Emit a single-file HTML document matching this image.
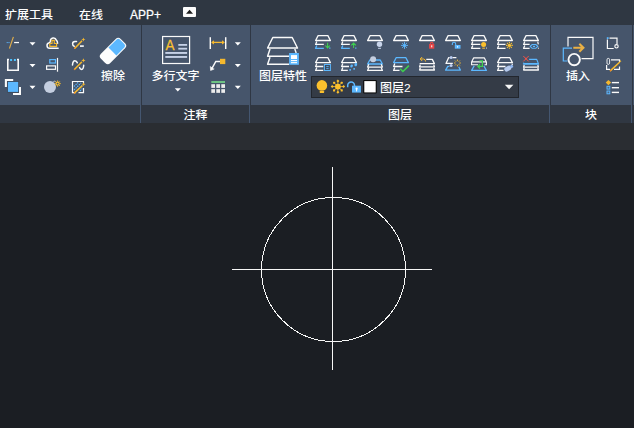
<!DOCTYPE html>
<html lang="zh-CN">
<head>
<meta charset="utf-8">
<title>CAD</title>
<style>
html,body{margin:0;padding:0;}
body{width:634px;height:428px;overflow:hidden;background:#1b1e23;position:relative;
 font-family:"Liberation Sans","Noto Sans CJK SC",sans-serif;font-size:12px;color:#fff;font-weight:500;}
.abs{position:absolute;}
#tabs{left:0;top:0;width:634px;height:25px;background:#2f3742;}
#ribbon{left:0;top:25px;width:634px;height:80px;background:#46556b;}
#labels{left:0;top:105px;width:634px;height:18px;background:#303742;}
#band{left:0;top:123px;width:634px;height:27px;background:#2a2d32;}
#canvas{left:0;top:150px;width:634px;height:278px;background:#1b1e23;}
.t{position:absolute;white-space:nowrap;line-height:16px;height:16px;transform:scaleY(0.93);transform-origin:0 16px;}
.sepd{position:absolute;top:25px;height:80px;width:1px;background:#2f3744;}
.sepl{position:absolute;top:105px;height:18px;width:1px;background:#445670;}
#combo{left:311px;top:76px;width:208px;height:22px;background:#343b46;border:1px solid #22262d;box-sizing:border-box;}
#svg{left:0;top:0;}
</style>
</head>
<body>
<div id="tabs" class="abs"></div>
<div id="ribbon" class="abs"></div>
<div id="labels" class="abs"></div>
<div id="band" class="abs"></div>
<div id="canvas" class="abs"></div>
<div class="sepd" style="left:141px"></div>
<div class="sepd" style="left:250px"></div>
<div class="sepd" style="left:550px"></div>
<div class="sepd" style="left:632px"></div>
<div class="sepl" style="left:140px"></div>
<div class="sepl" style="left:249px"></div>
<div class="sepl" style="left:549px"></div>
<div class="sepl" style="left:631px"></div>
<div id="combo" class="abs"></div>

<div class="t" style="left:5px;top:7px">扩展工具</div>
<div class="t" style="left:79px;top:7px">在线</div>
<div class="t" style="left:130px;top:7px;-webkit-text-stroke:0.25px #fff;transform:scaleY(1.1);transform-origin:0 12.500px">APP+</div>
<div class="t" style="left:101px;top:68px">擦除</div>
<div class="t" style="left:151.500px;top:68px">多行文字</div>
<div class="t" style="left:259px;top:68px">图层特性</div>
<div class="t" style="left:380px;top:80px">图层2</div>
<div class="t" style="left:566px;top:68px">插入</div>
<div class="t" style="left:183.500px;top:107px">注释</div>
<div class="t" style="left:388px;top:107px">图层</div>
<div class="t" style="left:585px;top:107px">块</div>

<svg id="svg" class="abs" width="634" height="428" viewBox="0 0 634 428">
<rect x="183" y="7" width="13" height="10" rx="1" fill="#fbfbfb"/>
<path d="M186 13.800 L189.500 9.800 L193 13.800 Z" fill="#1c1c1c"/>
<line x1="9.400" y1="48.500" x2="13.400" y2="36.900" stroke="#e0ad4a" stroke-width="1.150"/>
<rect x="6.700" y="42" width="1" height="1.100" fill="#5cb8ff"/><rect x="8.500" y="42" width="1" height="1.100" fill="#5cb8ff"/>
<line x1="14.100" y1="42.550" x2="19" y2="42.550" stroke="#fafafa" stroke-width="1.250"/>
<path d="M29.50 42.30 L35.50 42.30 L32.50 45.60 Z" fill="#ffffff"/>
<path d="M29.50 63.90 L35.50 63.90 L32.50 67.20 Z" fill="#ffffff"/>
<path d="M29.50 85.70 L35.50 85.70 L32.50 89.00 Z" fill="#ffffff"/>
<path d="M58.100 48.300 L49.700 48.300 A2.800 2.800 0 0 1 49.300 42.750 Q50.300 42.300 50.400 41 A3 3 0 0 1 56.300 40.200 Q57.500 41.200 57.600 43.300" fill="none" stroke="#fafafa" stroke-width="1.500" stroke-linecap="round"/>
<path d="M52 43.500 L52 40.300 L54.300 40.300 L54.300 43.500 L56.600 43.500 L56.600 46.400 L49.800 46.400 L49.800 43.500 Z" fill="none" stroke="#f5b82e" stroke-width="1.150"/>
<path d="M76.500 41.600 L75 41.600 Q72.600 41.800 72.600 43.800 Q72.600 45.800 74.200 46.200" fill="none" stroke="#fafafa" stroke-width="1.5" stroke-linecap="round"/>
<line x1="80" y1="46.100" x2="83.800" y2="46.100" stroke="#fafafa" stroke-width="1.600"/>
<line x1="74.8" y1="48.2" x2="81.6" y2="41.2" stroke="#f5b82e" stroke-width="1.6" stroke-linecap="round"/><circle cx="74.8" cy="48.2" r="0.7" fill="#f07a2a"/>
<path d="M83.4 37.4 L83.99 38.91 L85.5 39.5 L83.99 40.09 L83.4 41.6 L82.81 40.09 L81.30000000000001 39.5 L82.81 38.91 Z" fill="#f5b82e"/>
<path d="M9 59.500 L7.800 59.500 L7.800 70.200 L18.200 70.200 L18.200 59.500 L17 59.500" fill="none" stroke="#fafafa" stroke-width="1.600"/>
<rect x="10.100" y="59" width="2" height="2" fill="#4fc3ff"/><rect x="13.900" y="59" width="2" height="2" fill="#4fc3ff"/>
<rect x="49.800" y="59.600" width="5.700" height="3.400" fill="none" stroke="#5cb8ff" stroke-width="1.2"/>
<rect x="46.600" y="65.900" width="8.900" height="3.400" fill="none" stroke="#fafafa" stroke-width="1.2"/>
<line x1="57.500" y1="57.900" x2="57.500" y2="71.700" stroke="#fafafa" stroke-width="1.2"/>
<path d="M72.500 65 Q72.800 60.800 74.900 60.800 Q76.600 60.800 77.300 62.800" fill="none" stroke="#fafafa" stroke-width="1.5" stroke-linecap="round"/>
<path d="M79.500 67.600 Q80.200 69.400 81.600 69.400 Q83.500 69.400 83.700 65.300" fill="none" stroke="#fafafa" stroke-width="1.5" stroke-linecap="round"/>
<line x1="74.6" y1="69.3" x2="81.5" y2="62.3" stroke="#f5b82e" stroke-width="1.6" stroke-linecap="round"/><circle cx="74.6" cy="69.3" r="0.7" fill="#f07a2a"/>
<path d="M83.4 58.3 L83.99 59.81 L85.5 60.4 L83.99 60.99 L83.4 62.5 L82.81 60.99 L81.30000000000001 60.4 L82.81 59.81 Z" fill="#f5b82e"/>
<path d="M5.900 87 L5.900 80 L13.200 80" fill="none" stroke="#fafafa" stroke-width="2.100"/>
<path d="M13 94 L20 94 L20 87" fill="none" stroke="#fafafa" stroke-width="2"/>
<rect x="7.100" y="81.100" width="11.800" height="11.500" fill="#3b4859"/><rect x="7.900" y="81.900" width="10.300" height="10" fill="#5cb8ff"/>
<circle cx="50" cy="86.900" r="6" fill="#c4cee0"/>
<path d="M53.300 81.700 Q54.500 80.700 55.600 81.700" fill="none" stroke="#c4cee0" stroke-width="0.9"/>
<line x1="59.50" y1="83.60" x2="60.70" y2="83.60" stroke="#fbc02d" stroke-width="1"/><line x1="58.94" y1="84.94" x2="59.79" y2="85.79" stroke="#fbc02d" stroke-width="1"/><line x1="57.60" y1="85.50" x2="57.60" y2="86.70" stroke="#fbc02d" stroke-width="1"/><line x1="56.26" y1="84.94" x2="55.41" y2="85.79" stroke="#fbc02d" stroke-width="1"/><line x1="55.70" y1="83.60" x2="54.50" y2="83.60" stroke="#fbc02d" stroke-width="1"/><line x1="56.26" y1="82.26" x2="55.41" y2="81.41" stroke="#fbc02d" stroke-width="1"/><line x1="57.60" y1="81.70" x2="57.60" y2="80.50" stroke="#fbc02d" stroke-width="1"/><line x1="58.94" y1="82.26" x2="59.79" y2="81.41" stroke="#fbc02d" stroke-width="1"/><circle cx="57.600" cy="83.600" r="1.500" fill="none" stroke="#fbc02d" stroke-width="1.100"/>
<path d="M75.500 92.700 L72.500 92.700 L72.500 81.500 L83.500 81.500 L83.500 84 M83.500 88 L83.500 92.700 L78.500 92.700" fill="none" stroke="#fafafa" stroke-width="1.2"/>
<g stroke="#5cb8ff" stroke-width="1.2" stroke-dasharray="1.4 0.9"><line x1="74" y1="86.500" x2="78" y2="82.500"/><line x1="74" y1="90" x2="81" y2="83"/><line x1="76.500" y1="91" x2="82" y2="85.500"/><line x1="80" y1="91" x2="82.300" y2="88.700"/></g>
<line x1="74.5" y1="92.9" x2="82" y2="86" stroke="#f5b82e" stroke-width="1.6" stroke-linecap="round"/><circle cx="74.5" cy="92.9" r="0.7" fill="#f07a2a"/>
<path d="M83.6 82.3 L84.16 83.74 L85.6 84.3 L84.16 84.86 L83.6 86.3 L83.04 84.86 L81.6 84.3 L83.04 83.74 Z" fill="#f5b82e"/>
<g transform="translate(113 51) rotate(-45)"><rect x="-14" y="-6.600" width="28" height="13.200" rx="3.600" fill="#fdfdfd"/><path d="M-0.800 -5.600 L10.400 -5.600 A2.600 2.600 0 0 1 13 -3 L13 3 A2.600 2.600 0 0 1 10.400 5.600 L-0.800 5.600 Z" fill="#5cb8ff"/></g>
<rect x="162.600" y="36.500" width="27" height="27" fill="none" stroke="#fafafa" stroke-width="1.2"/>
<text x="0" y="0" transform="translate(165.600 49.900) scale(0.920 1)" font-family="Liberation Sans, sans-serif" font-weight="normal" font-size="14.600" fill="#fac030" stroke="#fac030" stroke-width="0.25">A</text>
<rect x="178.300" y="44" width="8.800" height="1.800" fill="#c6d1e6"/><rect x="178.300" y="47.800" width="8.800" height="1.800" fill="#c6d1e6"/>
<rect x="165.300" y="52" width="21.800" height="1.900" fill="#c6d1e6"/><rect x="165.300" y="56" width="21.800" height="1.900" fill="#c6d1e6"/>
<path d="M174.80 88.30 L180.80 88.30 L177.80 91.60 Z" fill="#ffffff"/>
<line x1="210.300" y1="37.200" x2="210.300" y2="49" stroke="#fafafa" stroke-width="1.450"/><line x1="225.700" y1="37.200" x2="225.700" y2="49" stroke="#fafafa" stroke-width="1.450"/>
<line x1="212" y1="42.400" x2="224" y2="42.400" stroke="#f5b82e" stroke-width="1.300"/>
<path d="M214 40.200 L211.100 42.400 L214 44.600 Z M222 40.200 L224.900 42.400 L222 44.600 Z" fill="#f5b82e"/>
<path d="M234.80 42.30 L240.80 42.30 L237.80 45.60 Z" fill="#ffffff"/>
<path d="M234.80 63.90 L240.80 63.90 L237.80 67.20 Z" fill="#ffffff"/>
<path d="M234.80 85.70 L240.80 85.70 L237.80 89.00 Z" fill="#ffffff"/>
<rect x="220" y="58.800" width="5.300" height="5.300" fill="#f5b82e"/>
<path d="M220 61.400 L215.800 61.400 L211.300 69.600" fill="none" stroke="#fafafa" stroke-width="1.450"/>
<path d="M210.300 66.300 L210.600 70.500 L214.300 69" fill="#fafafa" stroke="#fafafa" stroke-width="0.600" stroke-linejoin="round"/>
<rect x="211.300" y="81" width="13.700" height="2" fill="#6cc283"/>
<rect x="211.3" y="84.20" width="3.700" height="3.700" fill="#ececec"/>
<rect x="216.3" y="84.20" width="3.700" height="3.700" fill="#ececec"/>
<rect x="221.3" y="84.20" width="3.700" height="3.700" fill="#ececec"/>
<rect x="211.3" y="89.15" width="3.700" height="3.700" fill="#ececec"/>
<rect x="216.3" y="89.15" width="3.700" height="3.700" fill="#ececec"/>
<rect x="221.3" y="89.15" width="3.700" height="3.700" fill="#ececec"/>
<g fill="none" stroke="#fafafa" stroke-width="1.45" stroke-linejoin="round"><path d="M272.800 37.500 L292.200 37.500 L297.500 48 L267.600 48 Z"/><path d="M270 49 L267.600 56.200 L289 56.200 M294.800 49 L296.200 53"/><path d="M270 57.200 L267.600 64.300 L289 64.300"/></g>
<rect x="289.100" y="53" width="9.800" height="11.800" fill="#5cb8ff"/>
<rect x="291" y="55.100" width="6" height="3.900" fill="#fff"/><rect x="291" y="60" width="6" height="1.100" fill="#fff"/><rect x="291" y="62.100" width="6" height="1.100" fill="#fff"/>
<g transform="translate(315 35)"><path d="M3.1 0.6 L12.9 0.6 L15.4 5.5 L0.6 5.5 Z" fill="none" stroke="#fafafa" stroke-width="1.3" stroke-linejoin="round"/><path d="M1.8 6.5 L0.6 9.4 L8.8 9.4" fill="none" stroke="#fafafa" stroke-width="1.3" stroke-linejoin="round"/><path d="M1.8 10.4 L0.6 13.3 L8.8 13.3" fill="none" stroke="#5cb8ff" stroke-width="1.3" stroke-linejoin="round"/><rect x="14.200" y="12.500" width="1.200" height="1.200" fill="#5cb8ff"/><path d="M12.6 7.800 L12.6 12.800 M10.3 10.500 L12.6 12.900 L14.899999999999999 10.500" fill="none" stroke="#3fd14f" stroke-width="1.05"/></g>
<g transform="translate(341 35)"><path d="M3.1 0.6 L12.9 0.6 L15.4 5.5 L0.6 5.5 Z" fill="none" stroke="#fafafa" stroke-width="1.3" stroke-linejoin="round"/><path d="M1.8 6.5 L0.6 9.4 L8.8 9.4" fill="none" stroke="#fafafa" stroke-width="1.3" stroke-linejoin="round"/><path d="M1.8 10.4 L0.6 13.3 L8.8 13.3" fill="none" stroke="#5cb8ff" stroke-width="1.3" stroke-linejoin="round"/><rect x="14.200" y="12.500" width="1.200" height="1.200" fill="#5cb8ff"/><path d="M12.6 13 L12.6 8 M10.3 10.300 L12.6 7.900 L14.899999999999999 10.300" fill="none" stroke="#3fd14f" stroke-width="1.05"/></g>
<g transform="translate(367 35)"><path d="M3.1 0.6 L12.9 0.6 L15.4 5.5 L0.6 5.5 Z" fill="none" stroke="#fafafa" stroke-width="1.3" stroke-linejoin="round"/><circle cx="12.5" cy="9.3" r="2.7" fill="#c8d4ea"/><rect x="11.02" y="12.80" width="2.97" height="1" fill="#c8d4ea"/></g>
<g transform="translate(393 35)"><path d="M3.1 0.6 L12.9 0.6 L15.4 5.5 L0.6 5.5 Z" fill="none" stroke="#fafafa" stroke-width="1.3" stroke-linejoin="round"/><line x1="8.00" y1="10.40" x2="15.00" y2="10.40" stroke="#5cb8ff" stroke-width="0.9"/><line x1="9.03" y1="7.93" x2="13.97" y2="12.87" stroke="#5cb8ff" stroke-width="0.9"/><line x1="11.50" y1="6.90" x2="11.50" y2="13.90" stroke="#5cb8ff" stroke-width="0.9"/><line x1="13.97" y1="7.93" x2="9.03" y2="12.87" stroke="#5cb8ff" stroke-width="0.9"/><circle cx="11.5" cy="10.4" r="1" fill="#5cb8ff"/></g>
<g transform="translate(419 35)"><path d="M3.1 0.6 L12.9 0.6 L15.4 5.5 L0.6 5.5 Z" fill="none" stroke="#fafafa" stroke-width="1.3" stroke-linejoin="round"/><rect x="10.100" y="9" width="5.200" height="4.700" fill="#e84545"/><path d="M11.400 9.200 L11.400 8.700 A1.350 1.350 0 0 1 14.100 8.700 L14.100 9.200" fill="none" stroke="#e84545" stroke-width="1.1"/><rect x="12.250" y="10.300" width="1" height="2" fill="#fff"/></g>
<g transform="translate(445 35)"><path d="M3.1 0.6 L12.9 0.6 L15.4 5.5 L0.6 5.5 Z" fill="none" stroke="#fafafa" stroke-width="1.3" stroke-linejoin="round"/><rect x="9.800" y="10" width="5.700" height="3.700" fill="#5cb8ff"/><path d="M7.300 10 L7.300 9 A1.700 1.700 0 0 1 10.700 9 L10.700 10.200" fill="none" stroke="#5cb8ff" stroke-width="1.1"/><rect x="12.200" y="11" width="0.900" height="1.600" fill="#fff"/></g>
<g transform="translate(471 35)"><path d="M3.1 0.6 L12.9 0.6 L15.4 5.5 L0.6 5.5 Z" fill="none" stroke="#fafafa" stroke-width="1.3" stroke-linejoin="round"/><path d="M1.8 6.5 L0.6 9.4 L9.3 9.4" fill="none" stroke="#fafafa" stroke-width="1.3" stroke-linejoin="round"/><path d="M1.8 10.4 L0.6 13.3 L9.3 13.3" fill="none" stroke="#fafafa" stroke-width="1.3" stroke-linejoin="round"/><rect x="15" y="12.600" width="0.900" height="0.900" fill="#fafafa"/><circle cx="12.6" cy="9.4" r="2.5" fill="#fbc02d"/><rect x="11.22" y="12.70" width="2.75" height="1" fill="#fbc02d"/></g>
<g transform="translate(497 35)"><path d="M3.1 0.6 L12.9 0.6 L15.4 5.5 L0.6 5.5 Z" fill="none" stroke="#fafafa" stroke-width="1.3" stroke-linejoin="round"/><path d="M1.8 6.5 L0.6 9.4 L8.5 9.4" fill="none" stroke="#fafafa" stroke-width="1.3" stroke-linejoin="round"/><path d="M1.8 10.4 L0.6 13.3 L8.5 13.3" fill="none" stroke="#fafafa" stroke-width="1.3" stroke-linejoin="round"/><circle cx="12.4" cy="10.4" r="1.70" fill="#fbc02d"/><line x1="14.44" y1="10.40" x2="15.80" y2="10.40" stroke="#fbc02d" stroke-width="1.1"/><line x1="13.84" y1="11.84" x2="14.80" y2="12.80" stroke="#fbc02d" stroke-width="1.1"/><line x1="12.40" y1="12.44" x2="12.40" y2="13.80" stroke="#fbc02d" stroke-width="1.1"/><line x1="10.96" y1="11.84" x2="10.00" y2="12.80" stroke="#fbc02d" stroke-width="1.1"/><line x1="10.36" y1="10.40" x2="9.00" y2="10.40" stroke="#fbc02d" stroke-width="1.1"/><line x1="10.96" y1="8.96" x2="10.00" y2="8.00" stroke="#fbc02d" stroke-width="1.1"/><line x1="12.40" y1="8.36" x2="12.40" y2="7.00" stroke="#fbc02d" stroke-width="1.1"/><line x1="13.84" y1="8.96" x2="14.80" y2="8.00" stroke="#fbc02d" stroke-width="1.1"/></g>
<g transform="translate(523 35)"><path d="M3.1 0.6 L12.9 0.6 L15.4 5.5 L0.6 5.5 Z" fill="none" stroke="#fafafa" stroke-width="1.3" stroke-linejoin="round"/><path d="M1.8 6.5 L0.6 9.4 L6.6 9.4" fill="none" stroke="#fafafa" stroke-width="1.3" stroke-linejoin="round"/><path d="M1.8 10.4 L0.6 13.3 L6.6 13.3" fill="none" stroke="#fafafa" stroke-width="1.3" stroke-linejoin="round"/><path d="M14.700 6.600 L15.300 9.400" stroke="#fafafa" stroke-width="1.2"/><rect x="14.900" y="12.700" width="1" height="1" fill="#fafafa"/><path d="M7.100 11.400 L9.300 9.500 L12.700 9.500 L14.900 11.400 L12.700 13.300 L9.300 13.300 Z" fill="none" stroke="#5cb8ff" stroke-width="1.1" stroke-linejoin="round"/><rect x="9.900" y="10.850" width="2.200" height="1.100" rx="0.500" fill="#5cb8ff"/></g>
<g transform="translate(315 57.1)"><path d="M3.1 0.6 L12.9 0.6 L15.4 5.5 L0.6 5.5 Z" fill="none" stroke="#fafafa" stroke-width="1.3" stroke-linejoin="round"/><path d="M1.8 6.5 L0.6 9.4 L8.3 9.4" fill="none" stroke="#fafafa" stroke-width="1.3" stroke-linejoin="round"/><path d="M1.8 10.4 L0.6 13.3 L8.3 13.3" fill="none" stroke="#fafafa" stroke-width="1.3" stroke-linejoin="round"/><rect x="9.400" y="7.400" width="6" height="6" fill="#3b4a5e" stroke="#5cb8ff" stroke-width="1"/><line x1="11.300" y1="9.500" x2="13.600" y2="9.500" stroke="#5cb8ff" stroke-width="0.9"/><line x1="11.300" y1="11.500" x2="13.600" y2="11.500" stroke="#5cb8ff" stroke-width="0.9"/></g>
<g transform="translate(341 57.1)"><path d="M3.1 0.6 L12.9 0.6 L15.4 5.5 L0.6 5.5 Z" fill="none" stroke="#fafafa" stroke-width="1.3" stroke-linejoin="round"/><path d="M1.8 6.5 L0.6 9.4 L8 9.4" fill="none" stroke="#fafafa" stroke-width="1.3" stroke-linejoin="round"/><path d="M1.8 10.4 L0.6 13.3 L6.8 13.3" fill="none" stroke="#fafafa" stroke-width="1.3" stroke-linejoin="round"/><g fill="#5cb8ff"><rect x="8.300" y="11.900" width="1.700" height="1.700" rx="0.400"/><ellipse cx="10.600" cy="8.900" rx="1.250" ry="1.600" transform="rotate(25 10.600 8.900)"/><rect x="12.300" y="10.900" width="1.700" height="1.700" rx="0.400"/><ellipse cx="14.800" cy="7.500" rx="1.300" ry="1.800" transform="rotate(25 14.800 7.500)"/></g></g>
<g transform="translate(367 57.1)"><path d="M2.800 2.900 L13.200 2.900 L15.400 6.900 L0.600 6.900 Z" fill="none" stroke="#5cb8ff" stroke-width="1.300" stroke-linejoin="round"/><path d="M1.8 7.1 L0.6 10 L15.4 10 L14.2 7.1" fill="none" stroke="#fafafa" stroke-width="1.3" stroke-linejoin="round"/><path d="M1.8 10.4 L0.6 13.3 L15.4 13.3 L14.2 10.4" fill="none" stroke="#fafafa" stroke-width="1.3" stroke-linejoin="round"/><circle cx="6.100" cy="2.200" r="3" fill="#c4cee0"/></g>
<g transform="translate(393 57.1)"><path d="M3.1 0.6 L12.9 0.6 L15.4 5.5 L0.6 5.5 Z" fill="none" stroke="#5cb8ff" stroke-width="1.3" stroke-linejoin="round"/><path d="M1.8 6.5 L0.6 9.4 L9.5 9.4" fill="none" stroke="#fafafa" stroke-width="1.3" stroke-linejoin="round"/><path d="M1.8 10.4 L0.6 13.3 L6.5 13.3" fill="none" stroke="#fafafa" stroke-width="1.3" stroke-linejoin="round"/><path d="M7.200 11.700 L9.900 14.400 L15.900 8.500" fill="none" stroke="#3fd14f" stroke-width="1.5"/></g>
<g transform="translate(419 57.1)"><path d="M7.300 2.300 L13.300 2.300 L15.400 6.500 L0.600 6.500" fill="none" stroke="#fafafa" stroke-width="1.300" stroke-linejoin="round"/><path d="M1.300 7.500 L0.600 9.700 L15.400 9.700 L14.700 7.500 M1.300 10.700 L0.600 12.900 L15.400 12.900 L14.700 10.700" fill="none" stroke="#fafafa" stroke-width="1.300" stroke-linejoin="round"/><path d="M1.400 1.900 L4.600 1.900 Q6.500 2.200 6.600 4.400" fill="none" stroke="#f5b82e" stroke-width="1"/><path d="M3.200 -0.100 L1.200 1.900 L3.200 3.900" fill="none" stroke="#f5b82e" stroke-width="1"/></g>
<g transform="translate(445 57.1)"><path d="M7.500 0.500 L11.400 0.500 M4.700 0.500 L3.700 0.500 L1 6.300 L7.800 6.300" fill="none" stroke="#fafafa" stroke-width="1.300" stroke-linejoin="round"/><path d="M4.400 9.200 L2.800 9.200 L0.600 13 L15.400 13 L13.700 9.600" fill="none" stroke="#5cb8ff" stroke-width="1.300" stroke-linejoin="round"/><circle cx="6.100" cy="0.400" r="1.500" fill="#b9cbef"/><circle cx="6.100" cy="8.500" r="1.500" fill="#b9cbef"/><line x1="14.30" y1="5.90" x2="15.80" y2="5.90" stroke="#fbc02d" stroke-width="0.95"/><line x1="13.74" y1="7.24" x2="14.80" y2="8.30" stroke="#fbc02d" stroke-width="0.95"/><line x1="12.40" y1="7.80" x2="12.40" y2="9.30" stroke="#fbc02d" stroke-width="0.95"/><line x1="11.06" y1="7.24" x2="10.00" y2="8.30" stroke="#fbc02d" stroke-width="0.95"/><line x1="10.50" y1="5.90" x2="9.00" y2="5.90" stroke="#fbc02d" stroke-width="0.95"/><line x1="11.06" y1="4.56" x2="10.00" y2="3.50" stroke="#fbc02d" stroke-width="0.95"/><line x1="12.40" y1="4.00" x2="12.40" y2="2.50" stroke="#fbc02d" stroke-width="0.95"/><line x1="13.74" y1="4.56" x2="14.80" y2="3.50" stroke="#fbc02d" stroke-width="0.95"/></g>
<g transform="translate(471 57.1)"><path d="M2.600 0.800 L13.400 0.800 L15.400 4.800 L0.600 4.800 Z" fill="none" stroke="#fafafa" stroke-width="1.200" stroke-linejoin="round"/><path d="M0.600 4.800 L0.600 7.600 L7 7.600 M15.400 4.800 L15.400 7.600 L13.500 7.600" fill="none" stroke="#fafafa" stroke-width="1.1"/><path d="M3.200 8.800 L0.600 13.300 L15.400 13.300 L12.800 8.800" fill="none" stroke="#5cb8ff" stroke-width="1.200" stroke-linejoin="round"/><path d="M8.500 3.800 L11.400 3.800 L11.400 9.300 L7 9.300 M9 7.200 L6.800 9.300 L9 11.400" fill="none" stroke="#3fd14f" stroke-width="1.200"/></g>
<g transform="translate(497 57.1)"><path d="M3.1 0.6 L12.9 0.6 L15.4 5.5 L0.6 5.5 Z" fill="none" stroke="#fafafa" stroke-width="1.3" stroke-linejoin="round"/><path d="M1.8 6.5 L0.6 9.4 L8.5 9.4" fill="none" stroke="#fafafa" stroke-width="1.3" stroke-linejoin="round"/><path d="M1.8 10.4 L0.6 13.3 L6.5 13.3" fill="none" stroke="#fafafa" stroke-width="1.3" stroke-linejoin="round"/><line x1="15" y1="6.500" x2="15.400" y2="8" stroke="#fafafa" stroke-width="1.1"/><g transform="rotate(-30 11.500 11)"><rect x="7" y="8.700" width="7.200" height="4.800" rx="2.300" fill="#b4c9ee"/><rect x="13.800" y="9.700" width="2.600" height="2.800" rx="0.600" fill="#8fb6f2"/></g></g>
<g transform="translate(523 57.1)"><path d="M0.300 -1.100 L5.700 4.300 M5.700 -1.100 L0.300 4.300" stroke="#f0524a" stroke-width="1"/><circle cx="3" cy="1.600" r="0.900" fill="#f0524a"/><path d="M6.100 2.300 L13.700 2.300 L15.300 6.300" fill="none" stroke="#5cb8ff" stroke-width="1.200" stroke-linejoin="round"/><path d="M0.300 6.800 L15.900 6.800 M0.900 5.600 L0.600 6.800" stroke="#5cb8ff" stroke-width="1.600"/><path d="M1.200 7.900 L0.600 10 L15.400 10 L14.800 7.900 M1.200 10.900 L0.600 12.900 L15.400 12.900 L14.800 10.900" fill="none" stroke="#fafafa" stroke-width="1.300" stroke-linejoin="round"/></g>
<circle cx="321.900" cy="85.400" r="5.300" fill="#fbc02d"/><rect x="319.700" y="91.100" width="4.400" height="1.800" rx="0.400" fill="#fbc02d"/>
<circle cx="337.9" cy="86.6" r="2.900" fill="#fbc02d"/><line x1="337.9" y1="86.6" x2="343.60" y2="86.60" stroke="#fbc02d" stroke-width="0.800"/><path d="M342.10 86.60 L343.60 85.10 L345.10 86.60 L343.60 88.10 Z" fill="#fbc02d"/><line x1="337.9" y1="86.6" x2="341.72" y2="90.42" stroke="#fbc02d" stroke-width="0.800"/><rect x="340.67" y="89.37" width="2.100" height="2.100" rx="0.500" fill="#fbc02d"/><line x1="337.9" y1="86.6" x2="337.90" y2="92.30" stroke="#fbc02d" stroke-width="0.800"/><path d="M336.40 92.30 L337.90 90.80 L339.40 92.30 L337.90 93.80 Z" fill="#fbc02d"/><line x1="337.9" y1="86.6" x2="334.08" y2="90.42" stroke="#fbc02d" stroke-width="0.800"/><rect x="333.03" y="89.37" width="2.100" height="2.100" rx="0.500" fill="#fbc02d"/><line x1="337.9" y1="86.6" x2="332.20" y2="86.60" stroke="#fbc02d" stroke-width="0.800"/><path d="M330.70 86.60 L332.20 85.10 L333.70 86.60 L332.20 88.10 Z" fill="#fbc02d"/><line x1="337.9" y1="86.6" x2="334.08" y2="82.78" stroke="#fbc02d" stroke-width="0.800"/><rect x="333.03" y="81.73" width="2.100" height="2.100" rx="0.500" fill="#fbc02d"/><line x1="337.9" y1="86.6" x2="337.90" y2="80.90" stroke="#fbc02d" stroke-width="0.800"/><path d="M336.40 80.90 L337.90 79.40 L339.40 80.90 L337.90 82.40 Z" fill="#fbc02d"/><line x1="337.9" y1="86.6" x2="341.72" y2="82.78" stroke="#fbc02d" stroke-width="0.800"/><rect x="340.67" y="81.73" width="2.100" height="2.100" rx="0.500" fill="#fbc02d"/>
<rect x="352" y="85.700" width="8.900" height="6.900" fill="#5cb8ff"/><path d="M347.700 87.200 L347.700 85.400 A3.400 3.400 0 0 1 354.500 85.400 L354.500 86" fill="none" stroke="#5cb8ff" stroke-width="1.500"/><circle cx="356.600" cy="88.700" r="1.100" fill="#fff"/><rect x="356.100" y="88.700" width="1" height="2.700" fill="#fff"/>
<rect x="363.200" y="80" width="13.600" height="13.500" rx="1" fill="#0c0c0c"/><rect x="364.300" y="81.100" width="11.400" height="11.300" fill="#fff"/>
<path d="M504.800 84.800 L513.400 84.800 L509.100 89.300 Z" fill="#f6f6f6"/>
<path d="M568 46.500 L568 37.300 L593 37.300 L593 58.600 L581.500 58.600" fill="none" stroke="#fafafa" stroke-width="1.200"/>
<path d="M572 48.200 L563.300 48.200 L563.300 61 L567.500 61" fill="none" stroke="#5cb8ff" stroke-width="1.200"/>
<circle cx="574.200" cy="59.600" r="5.700" fill="#46556b" stroke="#fafafa" stroke-width="1.900"/>
<path d="M573.300 47.800 L583 47.800 M579.300 43.800 L583.400 47.800 L579.300 51.800" fill="none" stroke="#e9b045" stroke-width="2.100"/>
<path d="M609.500 38.100 L617 38.100 L617 44 M607.400 39.600 L607.400 48.500 L613.700 48.500" fill="none" stroke="#fafafa" stroke-width="1.200"/><rect x="606.800" y="37.200" width="1.800" height="1.800" fill="#5cb8ff"/><circle cx="616.500" cy="46.300" r="1.700" fill="none" stroke="#fafafa" stroke-width="1.100"/>
<path d="M611 59.800 L619.500 59.800 L619.500 62 M606.600 65 L606.600 69.300 L610 69.300 M614 69.300 L619.500 69.300 L619.500 66.500" fill="none" stroke="#fafafa" stroke-width="1.200"/><rect x="607" y="58.400" width="2.600" height="6" rx="1.300" fill="none" stroke="#fafafa" stroke-width="0.900"/>
<line x1="610.5" y1="70.6" x2="619.3" y2="62.5" stroke="#f5b82e" stroke-width="1.6" stroke-linecap="round"/><circle cx="610.5" cy="70.6" r="0.7" fill="#f07a2a"/>
<path d="M620.3 60.0 L620.64 60.86 L621.5 61.2 L620.64 61.54 L620.3 62.400000000000006 L619.96 61.54 L619.0999999999999 61.2 L619.96 60.86 Z" fill="#f5b82e"/>
<path d="M608.400 79.900 L611.100 82.600 L608.400 85.300 L605.700 82.600 Z" fill="#f5b82e"/>
<rect x="607" y="86.300" width="2.800" height="2.800" fill="#4f6784" stroke="#5cb8ff" stroke-width="1"/><rect x="607" y="91" width="2.800" height="2.800" fill="#4f6784" stroke="#5cb8ff" stroke-width="1"/>
<line x1="611.800" y1="82.6" x2="619" y2="82.6" stroke="#fafafa" stroke-width="1.400"/>
<line x1="611.800" y1="87.7" x2="619" y2="87.7" stroke="#fafafa" stroke-width="1.400"/>
<line x1="611.800" y1="92.4" x2="619" y2="92.4" stroke="#fafafa" stroke-width="1.400"/>
<g stroke="#f7f7f7" stroke-width="1" fill="none" shape-rendering="crispEdges"><line x1="232" y1="269.500" x2="432" y2="269.500"/><line x1="332.500" y1="167" x2="332.500" y2="370"/><circle cx="333.500" cy="269.500" r="72"/></g>
</svg>
</body>
</html>
